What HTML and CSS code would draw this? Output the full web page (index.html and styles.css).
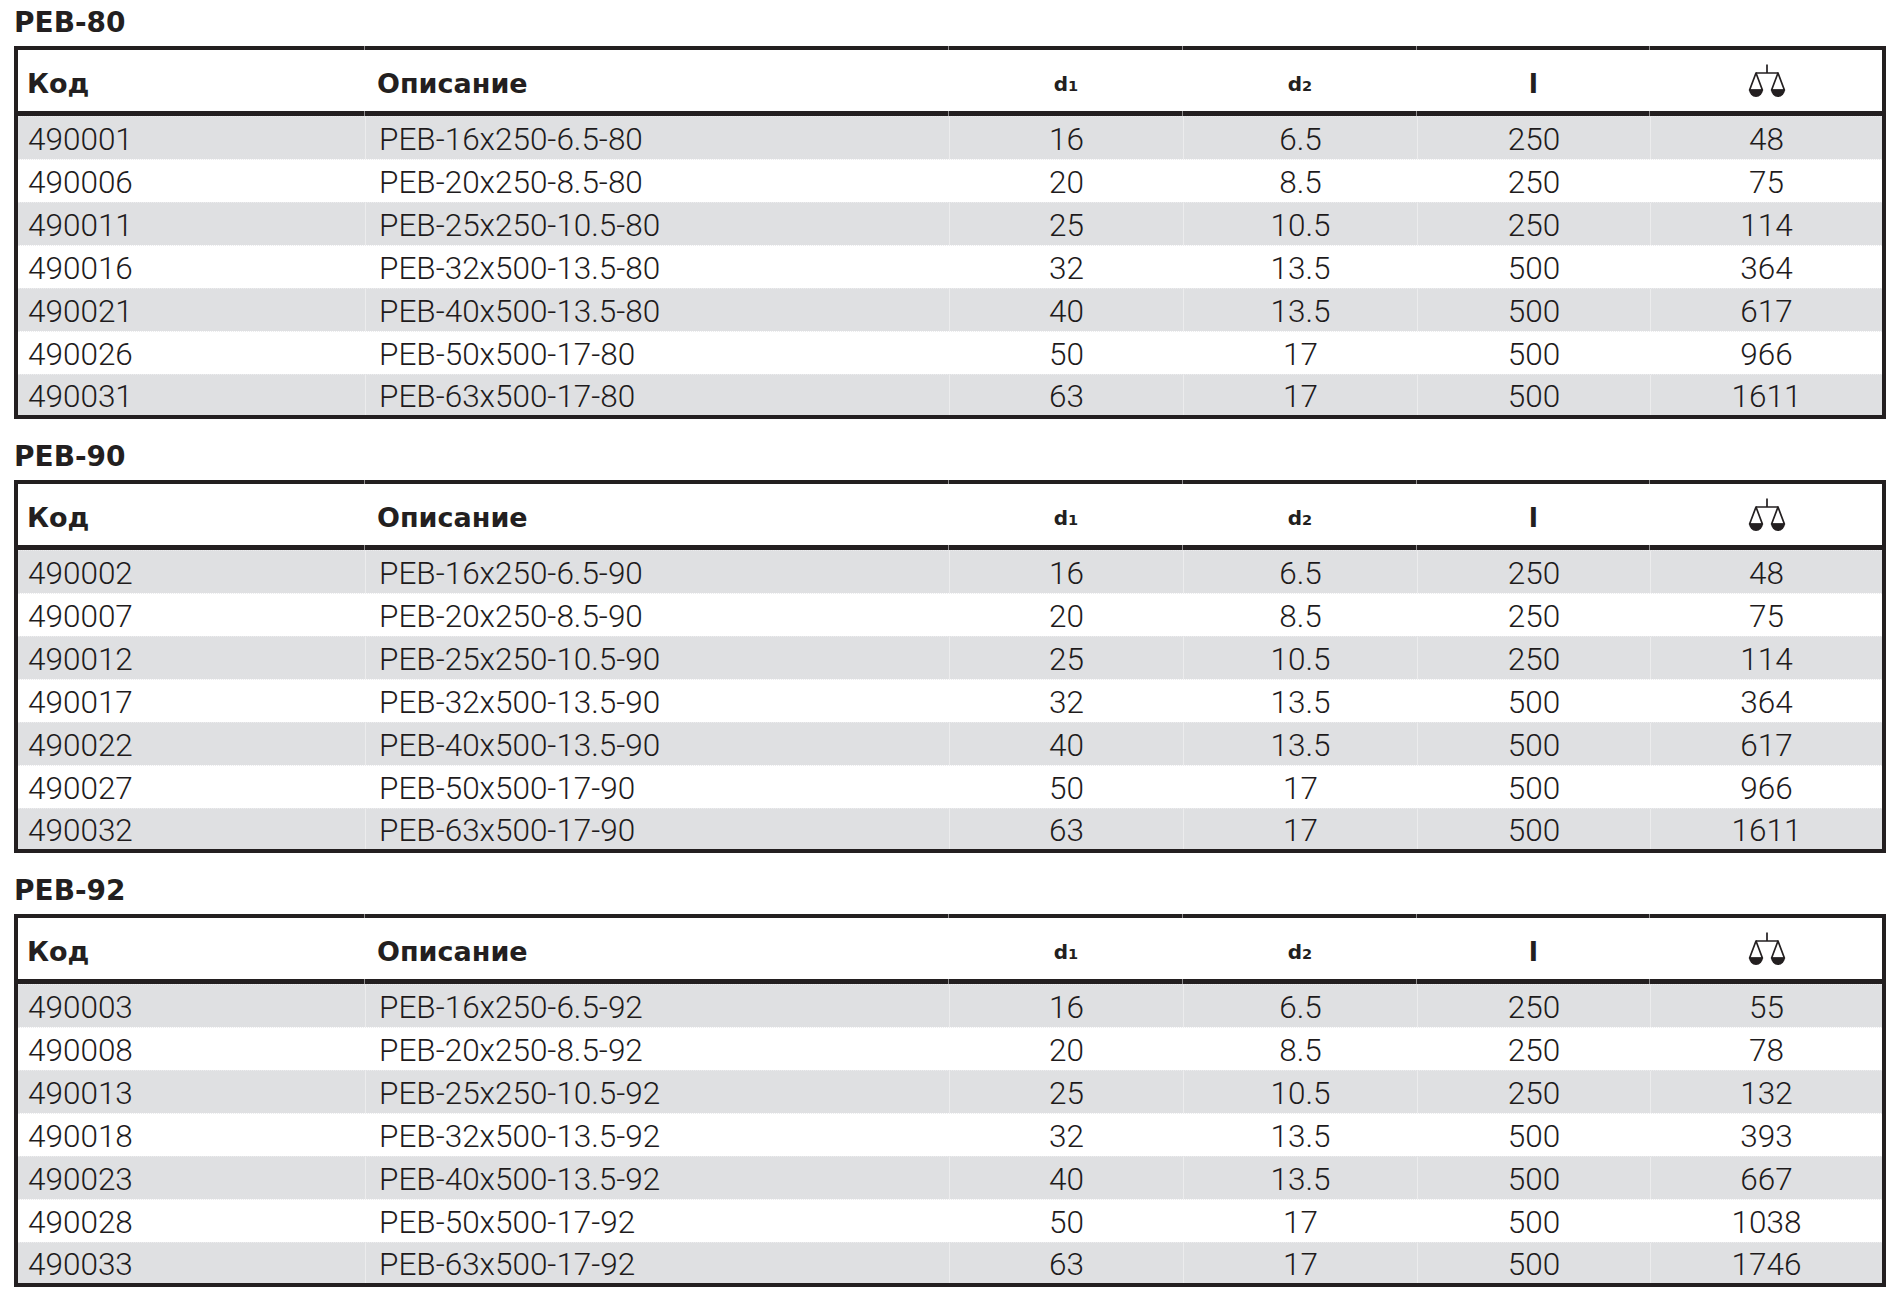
FILE: index.html
```html
<!DOCTYPE html>
<html lang="ru">
<head>
<meta charset="utf-8">
<title>PEB</title>
<link rel="stylesheet" href="styles.css">
</head>
<body>
<main class="page">

<section class="group">
  <h2 class="group-title">PEB-80</h2>
  <div class="tbl">
    <div class="row head">
      <div class="cell c-code">Код</div>
      <div class="cell c-desc">Описание</div>
      <div class="cell c-num"><span class="dsym">d<span class="sub">1</span></span></div>
      <div class="cell c-num"><span class="dsym">d<span class="sub">2</span></span></div>
      <div class="cell c-num">l</div>
      <div class="cell c-num c-icon"><svg class="scale" width="38" height="34" viewBox="0 0 38 34"><g stroke="#231f20" stroke-width="1.7" fill="none" stroke-linejoin="round"><path d="M19 0.5V9M8 9H30"/><path d="M8 9L1.6 26H14.4Z"/><path d="M30 9L23.6 26H36.4Z"/></g><path d="M1 25.5H15A7 7.5 0 0 1 1 25.5Z" fill="#231f20"/><path d="M23 25.5H37A7 7.5 0 0 1 23 25.5Z" fill="#231f20"/></svg></div>
    </div>
    <div class="row"><div class="cell c-code">490001</div><div class="cell c-desc">PEB-16x250-6.5-80</div><div class="cell c-num">16</div><div class="cell c-num">6.5</div><div class="cell c-num">250</div><div class="cell c-num">48</div></div>
    <div class="row"><div class="cell c-code">490006</div><div class="cell c-desc">PEB-20x250-8.5-80</div><div class="cell c-num">20</div><div class="cell c-num">8.5</div><div class="cell c-num">250</div><div class="cell c-num">75</div></div>
    <div class="row"><div class="cell c-code">490011</div><div class="cell c-desc">PEB-25x250-10.5-80</div><div class="cell c-num">25</div><div class="cell c-num">10.5</div><div class="cell c-num">250</div><div class="cell c-num">114</div></div>
    <div class="row"><div class="cell c-code">490016</div><div class="cell c-desc">PEB-32x500-13.5-80</div><div class="cell c-num">32</div><div class="cell c-num">13.5</div><div class="cell c-num">500</div><div class="cell c-num">364</div></div>
    <div class="row"><div class="cell c-code">490021</div><div class="cell c-desc">PEB-40x500-13.5-80</div><div class="cell c-num">40</div><div class="cell c-num">13.5</div><div class="cell c-num">500</div><div class="cell c-num">617</div></div>
    <div class="row"><div class="cell c-code">490026</div><div class="cell c-desc">PEB-50x500-17-80</div><div class="cell c-num">50</div><div class="cell c-num">17</div><div class="cell c-num">500</div><div class="cell c-num">966</div></div>
    <div class="row"><div class="cell c-code">490031</div><div class="cell c-desc">PEB-63x500-17-80</div><div class="cell c-num">63</div><div class="cell c-num">17</div><div class="cell c-num">500</div><div class="cell c-num">1611</div></div>
  </div>
</section>

<section class="group">
  <h2 class="group-title">PEB-90</h2>
  <div class="tbl">
    <div class="row head">
      <div class="cell c-code">Код</div>
      <div class="cell c-desc">Описание</div>
      <div class="cell c-num"><span class="dsym">d<span class="sub">1</span></span></div>
      <div class="cell c-num"><span class="dsym">d<span class="sub">2</span></span></div>
      <div class="cell c-num">l</div>
      <div class="cell c-num c-icon"><svg class="scale" width="38" height="34" viewBox="0 0 38 34"><g stroke="#231f20" stroke-width="1.7" fill="none" stroke-linejoin="round"><path d="M19 0.5V9M8 9H30"/><path d="M8 9L1.6 26H14.4Z"/><path d="M30 9L23.6 26H36.4Z"/></g><path d="M1 25.5H15A7 7.5 0 0 1 1 25.5Z" fill="#231f20"/><path d="M23 25.5H37A7 7.5 0 0 1 23 25.5Z" fill="#231f20"/></svg></div>
    </div>
    <div class="row"><div class="cell c-code">490002</div><div class="cell c-desc">PEB-16x250-6.5-90</div><div class="cell c-num">16</div><div class="cell c-num">6.5</div><div class="cell c-num">250</div><div class="cell c-num">48</div></div>
    <div class="row"><div class="cell c-code">490007</div><div class="cell c-desc">PEB-20x250-8.5-90</div><div class="cell c-num">20</div><div class="cell c-num">8.5</div><div class="cell c-num">250</div><div class="cell c-num">75</div></div>
    <div class="row"><div class="cell c-code">490012</div><div class="cell c-desc">PEB-25x250-10.5-90</div><div class="cell c-num">25</div><div class="cell c-num">10.5</div><div class="cell c-num">250</div><div class="cell c-num">114</div></div>
    <div class="row"><div class="cell c-code">490017</div><div class="cell c-desc">PEB-32x500-13.5-90</div><div class="cell c-num">32</div><div class="cell c-num">13.5</div><div class="cell c-num">500</div><div class="cell c-num">364</div></div>
    <div class="row"><div class="cell c-code">490022</div><div class="cell c-desc">PEB-40x500-13.5-90</div><div class="cell c-num">40</div><div class="cell c-num">13.5</div><div class="cell c-num">500</div><div class="cell c-num">617</div></div>
    <div class="row"><div class="cell c-code">490027</div><div class="cell c-desc">PEB-50x500-17-90</div><div class="cell c-num">50</div><div class="cell c-num">17</div><div class="cell c-num">500</div><div class="cell c-num">966</div></div>
    <div class="row"><div class="cell c-code">490032</div><div class="cell c-desc">PEB-63x500-17-90</div><div class="cell c-num">63</div><div class="cell c-num">17</div><div class="cell c-num">500</div><div class="cell c-num">1611</div></div>
  </div>
</section>

<section class="group">
  <h2 class="group-title">PEB-92</h2>
  <div class="tbl">
    <div class="row head">
      <div class="cell c-code">Код</div>
      <div class="cell c-desc">Описание</div>
      <div class="cell c-num"><span class="dsym">d<span class="sub">1</span></span></div>
      <div class="cell c-num"><span class="dsym">d<span class="sub">2</span></span></div>
      <div class="cell c-num">l</div>
      <div class="cell c-num c-icon"><svg class="scale" width="38" height="34" viewBox="0 0 38 34"><g stroke="#231f20" stroke-width="1.7" fill="none" stroke-linejoin="round"><path d="M19 0.5V9M8 9H30"/><path d="M8 9L1.6 26H14.4Z"/><path d="M30 9L23.6 26H36.4Z"/></g><path d="M1 25.5H15A7 7.5 0 0 1 1 25.5Z" fill="#231f20"/><path d="M23 25.5H37A7 7.5 0 0 1 23 25.5Z" fill="#231f20"/></svg></div>
    </div>
    <div class="row"><div class="cell c-code">490003</div><div class="cell c-desc">PEB-16x250-6.5-92</div><div class="cell c-num">16</div><div class="cell c-num">6.5</div><div class="cell c-num">250</div><div class="cell c-num">55</div></div>
    <div class="row"><div class="cell c-code">490008</div><div class="cell c-desc">PEB-20x250-8.5-92</div><div class="cell c-num">20</div><div class="cell c-num">8.5</div><div class="cell c-num">250</div><div class="cell c-num">78</div></div>
    <div class="row"><div class="cell c-code">490013</div><div class="cell c-desc">PEB-25x250-10.5-92</div><div class="cell c-num">25</div><div class="cell c-num">10.5</div><div class="cell c-num">250</div><div class="cell c-num">132</div></div>
    <div class="row"><div class="cell c-code">490018</div><div class="cell c-desc">PEB-32x500-13.5-92</div><div class="cell c-num">32</div><div class="cell c-num">13.5</div><div class="cell c-num">500</div><div class="cell c-num">393</div></div>
    <div class="row"><div class="cell c-code">490023</div><div class="cell c-desc">PEB-40x500-13.5-92</div><div class="cell c-num">40</div><div class="cell c-num">13.5</div><div class="cell c-num">500</div><div class="cell c-num">667</div></div>
    <div class="row"><div class="cell c-code">490028</div><div class="cell c-desc">PEB-50x500-17-92</div><div class="cell c-num">50</div><div class="cell c-num">17</div><div class="cell c-num">500</div><div class="cell c-num">1038</div></div>
    <div class="row"><div class="cell c-code">490033</div><div class="cell c-desc">PEB-63x500-17-92</div><div class="cell c-num">63</div><div class="cell c-num">17</div><div class="cell c-num">500</div><div class="cell c-num">1746</div></div>
  </div>
</section>

</main>
</body>
</html>
```

FILE: styles.css
```css
html, body {
  margin: 0;
  padding: 0;
  background: #ffffff;
}

body {
  color: #231f20;
  font-family: Roboto, "Liberation Sans", sans-serif;
}

.page {
  display: flex;
  flex-direction: column;
  gap: 23px;
  padding: 8px 14px 0;
}

.group-title {
  margin: 0 0 8px;
  font-family: "DejaVu Sans", sans-serif;
  font-weight: 700;
  font-size: 28px;
  line-height: 30px;
  color: #231f20;
}

.tbl {
  border: 4px solid #231f20;
}

.row {
  display: grid;
  grid-template-columns: 347px 584px 234px 234px 233px 232px;
  height: 43px;
  box-sizing: border-box;
  font-weight: 300;
  font-size: 31.5px;
  color: #1e1b1c;
}

.row:nth-child(even) {
  background: #dfe0e2;
}

.row:nth-child(odd) {
  background: #ffffff;
}

.row + .row:not(.head) {
  border-top: 1px dotted #ececee;
}

.row:last-child {
  height: 41px;
}

.cell {
  position: relative;
  display: flex;
  align-items: center;
  box-sizing: border-box;
  padding-top: 3px;
  white-space: nowrap;
}

.row:not(.head) .cell + .cell {
  border-left: 1px solid rgba(255, 255, 255, 0.4);
}

.c-code {
  padding-left: 10px;
}

.c-desc {
  padding-left: 13px;
}

.c-num {
  justify-content: center;
}

/* header row */
.head {
  height: 66px;
  border-bottom: 5px solid #231f20;
  font-family: "DejaVu Sans", sans-serif;
  font-weight: 700;
  font-size: 27px;
  color: #231f20;
}

.head .cell {
  padding-top: 6px;
}

.head .c-code {
  padding-left: 9px;
}

.head .c-desc {
  padding-left: 12px;
}

.head .cell + .cell::before,
.head .cell + .cell::after {
  content: "";
  position: absolute;
  left: -1px;
  width: 1px;
  background: #8f8d8e;
}

.head .cell + .cell::before {
  top: -4px;
  height: 4px;
}

.head .cell + .cell::after {
  bottom: -5px;
  height: 5px;
}

.dsym {
  font-size: 20px;
}

.sub {
  font-size: 14.5px;
}

.head .c-icon {
  padding-top: 0;
}

.scale {
  display: block;
  margin-left: 1px;
}
```
